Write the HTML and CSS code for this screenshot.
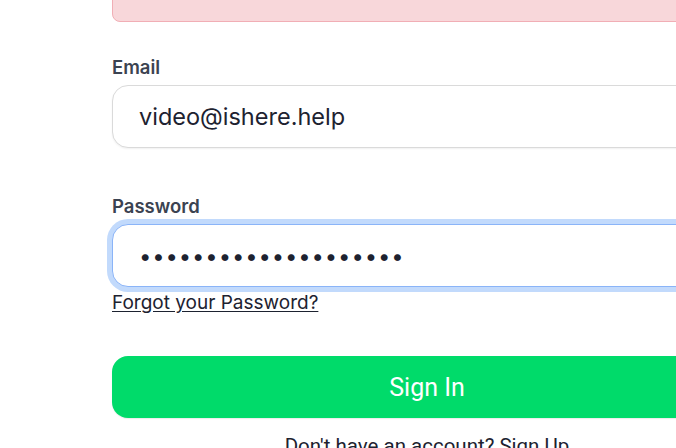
FILE: index.html
```html
<!DOCTYPE html>
<html>
<head>
<meta charset="utf-8">
<link rel="stylesheet" href="styles.css">
</head>
<body>
<div class="form">
  <div class="alert"></div>
  <div class="field field-email">
    <label class="label">Email</label>
    <div class="input">video@ishere.help</div>
  </div>
  <div class="field field-password">
    <label class="label">Password</label>
    <div class="input input-focus">••••••••••••••••••••</div>
  </div>
  <a class="forgot" href="#">Forgot your Password?</a>
  <button class="btn">Sign In</button>
  <p class="signup">Don't have an account? Sign Up</p>
</div>
</body>
</html>
```
FILE: styles.css
```css
html, body {
  margin: 0;
  padding: 0;
  background: #ffffff;
  overflow: hidden;
}
.form {
  margin-left: 112px;
  width: 630px;
  display: flex;
  flex-direction: column;
  font-family: Inter, "Noto Sans", sans-serif;
}
.alert {
  height: 60px;
  margin-top: -38px;
  background: #f8d7da;
  border: 1px solid #f1aeb5;
  border-radius: 8px;
  box-sizing: border-box;
}
.field {
  display: flex;
  flex-direction: column;
}
.field-email {
  margin-top: 34px;
}
.field-password {
  margin-top: 47px;
}
.label {
  font-size: 18.5px;
  font-weight: 600;
  line-height: 22px;
  color: #3b4351;
  margin-bottom: 7px;
}
.input {
  height: 63px;
  box-sizing: border-box;
  border: 1px solid #dadada;
  border-radius: 16px;
  padding-left: 26px;
  display: flex;
  align-items: center;
  font-size: 23.5px;
  color: #1d2230;
  background: #fff;
  box-shadow: 0 1px 2px rgba(0,0,0,0.06);
}
.input-focus {
  border-color: #8ab4f8;
  box-shadow: 0 0 0 5px #c2dafc;
  letter-spacing: 0.9px;
  font-size: 22px;
}
.forgot {
  margin-top: 5px;
  align-self: flex-start;
  font-size: 19px;
  line-height: 22px;
  color: #1d2230;
  text-decoration: underline;
  text-underline-offset: 2px;
}
.btn {
  margin-top: 42px;
  height: 62px;
  padding-top: 2px;
  border: none;
  border-radius: 16px;
  background: #00db6a;
  color: #fff;
  font-family: Roboto, sans-serif;
  font-size: 25px;
  box-shadow: 0 1px 1px rgba(0,0,0,0.08);
}
.signup {
  margin: 16px 0 0;
  text-align: center;
  font-family: Roboto, sans-serif;
  font-size: 20.5px;
  color: #1d2230;
}
```
